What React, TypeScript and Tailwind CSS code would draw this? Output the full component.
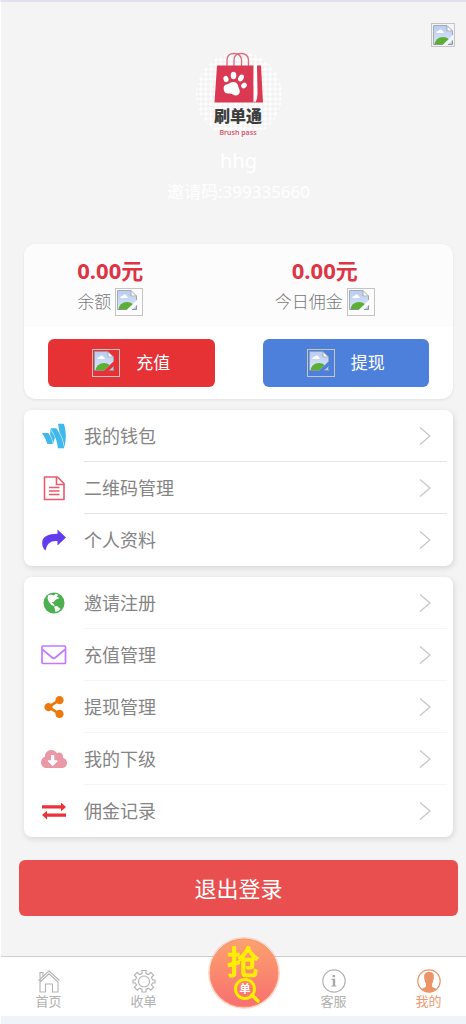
import React from 'react';
import { FaGoogleWallet, FaShareAlt, FaCloudDownloadAlt } from 'react-icons/fa';

const FONT = "font-['Noto_Sans','Noto_Sans_CJK_SC',sans-serif]";

type IconProps = { className?: string };

// Placeholder for pictures that have not loaded
function MissingImage({ className }: IconProps) {
  return (
    <span className={`inline-flex shrink-0 border border-[#c4c4c4] p-px ${className}`}>
      <svg viewBox="0 0 20 20" className="w-5 h-5">
        <defs>
          <linearGradient id="sky" x1="0" y1="0" x2="0" y2="1">
            <stop offset="0" stopColor="#b9cdf0" />
            <stop offset="1" stopColor="#dbe6fa" />
          </linearGradient>
          <clipPath id="sheet">
            <path d="M1 1H14L20 7V10L9.500 20H1Z" />
          </clipPath>
        </defs>
        <path d="M1 1H14L20 6.500V10L9.500 20H1Z" fill="url(#sky)" />
        <ellipse cx="10" cy="20" rx="8.500" ry="8" fill="#5cae35" clipPath="url(#sheet)" />
        <path d="M3.500 8q-.5-2 1.800-2q.7-2 2.500-1.500q1.700.3 1.700 1.700q1.600.2 1.200 1.800z" fill="#fff" />
        <path d="M20 15V20H14.500Z" fill="#b9cdf0" />
        <path d="M14 1V6.500H20Z" fill="#fff" />
        <path d="M0.500 19.500V0.500H14L19.500 6V10M14 1V6H19.500" fill="none" stroke="#9aa3ae" strokeWidth="0.900" />
        <path d="M0.500 19.500H9.500M15 19.500H19.500V15.500" fill="none" stroke="#8a929c" />
      </svg>
    </span>
  );
}

function Logo() {
  return (
    <svg viewBox="0 0 86 86" className="w-[86px] h-[86px]">
      <defs>
        <pattern id="check" width="7" height="7" patternUnits="userSpaceOnUse" patternTransform="rotate(45)">
          <rect width="7" height="7" fill="#f2f2f2" />
          <rect width="3.500" height="3.500" fill="#fdfdfd" />
          <rect x="3.500" y="3.500" width="3.500" height="3.500" fill="#fdfdfd" />
        </pattern>
      </defs>
      <circle cx="43" cy="43" r="43" fill="url(#check)" />
      <g fill="none" stroke="#dc6a7e" strokeWidth="1.300">
        <path d="M31 14V8q0-6.500 7-6.500t7.500 6.500v6" />
        <path d="M38 14V8q0-6.500 7-6.500t7.500 6.500v6" />
      </g>
      <path d="M21 13.500H58Q57 32 59 50.500H18.500Z" fill="#db3853" />
      <path d="M57.500 13.500h4q-1 20 0 26q0 8-4 11z" fill="#fff" />
      <path d="M61 13.500h4l2 37h-8q3-3 2.500-13z" fill="#db3853" />
      <g fill="#fff">
        <ellipse cx="30" cy="27" rx="2.500" ry="3.200" transform="rotate(-15 30 27)" />
        <ellipse cx="37.500" cy="23.500" rx="2.800" ry="3.700" />
        <ellipse cx="45" cy="26" rx="2.600" ry="3.700" transform="rotate(30 45 26)" />
        <ellipse cx="48" cy="33.500" rx="2.500" ry="3" transform="rotate(50 48 33.500)" />
        <path d="M28 39q-2-6 4-7q4-3 8-1.500q2 1.500 2.500 5q2.500 4.500 0 7q-2.500 2-5.500 0q-2-1.500-5-1q-3 0-4-2.500z" />
      </g>
      <text x="42" y="70" textAnchor="middle" fontSize="16" fontWeight="900" fill="#3d3d3d">刷单通</text>
      <text x="42" y="83" textAnchor="middle" fontSize="7" fontWeight="600" fill="#d4576c">Brush pass</text>
    </svg>
  );
}

const FileIcon = () => (
  <svg viewBox="0 0 24 26" className="w-6 h-[26px]" fill="none" stroke="#ea5a69" strokeWidth="1.600">
    <path d="M2.500 2H15.500L22 8.500V24.500H2.500Z" strokeLinejoin="round" />
    <path d="M14.500 2V9.500H22M7 12.500H17.500M7 16H17.500M7 19.500H17.500" />
  </svg>
);

const ShareIcon = () => (
  <svg viewBox="0 0 24 22" className="w-6 h-[22px]" fill="#633cf0">
    <path d="M15.500 0.500L24 8.500L15.500 16.500V12Q5 11 3.500 21.500Q0 19 0.200 13Q1 5 15.500 4.800Z" />
  </svg>
);

const GlobeIcon = () => (
  <svg viewBox="0 0 22 22" className="w-[22px] h-[22px]">
    <circle cx="11" cy="11" r="10.500" fill="#4caf50" />
    <path d="M5 3.500L8 2.500L10.500 3.500L13 1.800L15.500 3L13.500 4.500L16.500 6L13 7.500L10.500 10L8.500 10L11.500 13L11 14L8.500 13L6 10L4.500 6.500Z" fill="#fff" />
    <path d="M11 14.500L14 14L17.500 17Q15.500 19.500 12.500 20L12 17.500Z" fill="#fff" />
  </svg>
);

const MailIcon = () => (
  <svg viewBox="0 0 26 20" className="w-[26px] h-5" fill="none" stroke="#c278ff" strokeWidth="1.700">
    <rect x="1" y="1" width="23.500" height="17.500" rx="1" />
    <path d="M1.500 4.500L11 12.500Q12.800 14 14.500 12.500L24 4.500" />
  </svg>
);

const ExchangeIcon = () => (
  <svg viewBox="0 0 24 18" className="w-6 h-[18px]" fill="#eb3337">
    <path d="M0 3.200H19V0.500L24 4.900L19 9.300V6.500H0Z" />
    <path d="M24 11.500H5V8.700L0 13.100L5 17.500V14.800H24Z" />
  </svg>
);

const Chevron = () => (
  <svg viewBox="0 0 12 20" className="w-3 h-5" fill="none" stroke="#cbc7c7" strokeWidth="1.400">
    <path d="M1 1.500L11 10L1 18.500" />
  </svg>
);

const HomeIcon = () => (
  <svg viewBox="0 0 24 24" className="w-6 h-6" fill="none" stroke="#b3b3b3" strokeWidth="1.100">
    <path d="M1.500 11.500L12 2L22.500 11.500" />
    <path d="M3 13L12 4.800L21 13V23H15.500V15H8.500V23H3V10M3 9V3.500H6V7" />
  </svg>
);

const GearIcon = () => (
  <svg viewBox="0 0 24 24" className="w-6 h-6" fill="none" stroke="#b3b3b3" strokeWidth="1.200">
    <circle cx="12" cy="12.500" r="5.500" />
    <path d="M10 1.500h4v3l2.500 1l2.300-2.100l2.800 2.800L19.500 8.500l1 2.500h2.500v3h-2.500l-1 2l2 2.500l-2.700 2.700l-2.300-1.900l-2.500 1.200v2.500h-4v-2.500l-2.500-1.200l-2.300 1.900l-2.700-2.700l2-2.500l-1-2H1v-3h2.500l1-2.500L2.400 6.200l2.800-2.800l2.300 2.100l2.500-1z" />
  </svg>
);

const InfoIcon = () => (
  <svg viewBox="0 0 24 24" className="w-6 h-6">
    <circle cx="12" cy="12" r="11.200" fill="none" stroke="#b3b3b3" strokeWidth="1.200" />
    <path d="M10.600 6h2.500v2.300h-2.500zM9.500 9.800h3.700v6.700h1.300v1.100H9.500v-1.100h1.300v-5.600H9.500z" fill="#a8a8a8" />
  </svg>
);

const UserIcon = () => (
  <svg viewBox="0 0 24 24" className="w-6 h-6">
    <circle cx="12" cy="12" r="11.200" fill="#fff" stroke="#ea9468" strokeWidth="1.200" />
    <path d="M7.300 5.500Q9 2.500 12 2.800Q15.500 2.500 16.700 5.500Q17.300 9 16.300 11.500Q15.800 14 15 14.800V17.500Q16 18.500 20 20Q16.500 23.300 12 23.300T4 20Q8 18.500 9 17.500V14.800Q8 13.500 7.500 11Q6.700 8.500 7.300 5.500Z" fill="#ea9468" />
  </svg>
);

function GrabIcon() {
  return (
    <svg viewBox="0 0 76 76" className="w-[76px] h-[76px]">
      <defs>
        <linearGradient id="grab" x1="0" y1="0" x2="0" y2="1">
          <stop offset="0" stopColor="#fca26e" />
          <stop offset="1" stopColor="#f86f70" />
        </linearGradient>
      </defs>
      <circle cx="38" cy="38" r="36" fill="#fb9a78" opacity="0.35" />
      <circle cx="38" cy="38" r="34" fill="url(#grab)" stroke="#fb8f6c" />
      <text x="37" y="39" textAnchor="middle" fontSize="32" fontWeight="500" fill="#ffee00" stroke="#ffee00" strokeLinejoin="round">抢</text>
      <circle cx="39" cy="54" r="9.500" fill="none" stroke="#ffee00" strokeWidth="3" />
      <path d="M46 60L52 66" stroke="#ffee00" strokeWidth="3.500" strokeLinecap="round" />
      <text x="39" y="58" textAnchor="middle" fontSize="11" fontWeight="700" fill="#fff">单</text>
    </svg>
  );
}

const BALANCES = [
  { label: '余额', amount: '0.00元' },
  { label: '今日佣金', amount: '0.00元' },
];

const ACCOUNT_MENU = [
  { label: '我的钱包', icon: <FaGoogleWallet className="w-7 h-7 text-[#3fb8ec]" /> },
  { label: '二维码管理', icon: <FileIcon /> },
  { label: '个人资料', icon: <ShareIcon /> },
];

const MANAGE_MENU = [
  { label: '邀请注册', icon: <GlobeIcon /> },
  { label: '充值管理', icon: <MailIcon /> },
  { label: '提现管理', icon: <FaShareAlt className="w-[22px] h-[22px] text-[#ec780e]" /> },
  { label: '我的下级', icon: <FaCloudDownloadAlt className="w-[26px] h-[26px] text-[#eb98a6]" /> },
  { label: '佣金记录', icon: <ExchangeIcon /> },
];

function Menu({ items, line }: { items: typeof ACCOUNT_MENU; line: string }) {
  return (
    <ul className="mx-[23px] mt-[11px] rounded-lg bg-white shadow-[1px_2px_6px_rgba(0,0,0,0.12)]">
      {items.map((item, i) => (
        <li key={item.label}>
          <a href="#" className="flex h-[52px] items-center pr-1.5">
            <span className="flex w-[60px] justify-center">{item.icon}</span>
            <span className={`flex h-full flex-1 items-center justify-between pr-4 ${i < items.length - 1 ? `border-b ${line}` : ''}`}>
              <span className="text-lg text-[#848484]">{item.label}</span>
              <Chevron />
            </span>
          </a>
        </li>
      ))}
    </ul>
  );
}

function Tab({ label, children, active }: { label: string; children: React.ReactNode; active?: boolean }) {
  return (
    <a href="#" className={`flex w-1/5 flex-col items-center pt-3 text-[13px] leading-4 ${active ? 'text-[#ee9c74]' : 'text-[#b0b0b0]'}`}>
      {children}
      {label}
    </a>
  );
}

export default function App() {
  return (
    <div className={`overflow-x-hidden border-t-2 border-l border-t-[#dfe1ee] border-l-white bg-[#f4f4f4] ${FONT}`}>
      {/* The page runs slightly past the right edge of the window */}
      <div className="-mr-2.5">
        <header className="relative flex h-[242px] flex-col items-center pt-[50px] text-white">
          <a href="#" className="absolute top-[21px] right-[21px] flex">
            <MissingImage className="w-6 h-6" />
          </a>
          <Logo />
          <h1 className="mt-2 text-xl leading-[30px]">hhg</h1>
          <p className="text-[17px] leading-8">邀请码:399335660</p>
        </header>

        <section className="mx-[23px] overflow-hidden rounded-xl bg-white shadow-[0_1px_3px_rgba(0,0,0,0.08)]">
          <div className="grid grid-cols-2 bg-[#fcfcfc] pt-2.5">
            {BALANCES.map((b) => (
              <div key={b.label} className="flex h-[73px] flex-col items-center gap-0.5 pr-[42px]">
                <strong className="text-[22px] leading-8 font-bold text-[#dd3545]">{b.amount}</strong>
                <span className="flex items-center gap-1 text-[17px] font-light text-[#777]">
                  {b.label}
                  <MissingImage className="w-7 h-7" />
                </span>
              </div>
            ))}
          </div>
          <div className="grid grid-cols-2 gap-12 px-6 py-3 text-[17px] text-white">
            <button className="flex h-12 items-center justify-center gap-4 rounded-md bg-[#e63135]">
              <MissingImage className="w-7 h-7" />
              充值
            </button>
            <button className="flex h-12 items-center justify-center gap-4 rounded-md bg-[#4c80db]">
              <MissingImage className="w-7 h-7" />
              提现
            </button>
          </div>
        </section>

        <Menu items={ACCOUNT_MENU} line="border-[#e4e4e4]" />
        <Menu items={MANAGE_MENU} line="border-[#f5f5f5]" />

        <div className="px-[18px] pt-[23px] pb-10">
          <button className="h-14 w-full rounded-md bg-[#ea4f50] text-[22px] text-white">退出登录</button>
        </div>

        <nav className="flex h-[60px] border-t border-[#cfcfcf] bg-white">
          <Tab label="首页"><HomeIcon /></Tab>
          <Tab label="收单"><GearIcon /></Tab>
          <a href="#" className="-mt-[22px] flex w-1/5 justify-center pl-2.5">
            <GrabIcon />
          </a>
          <Tab label="客服"><InfoIcon /></Tab>
          <Tab label="我的" active><UserIcon /></Tab>
        </nav>
        <div className="h-2 bg-[#f0f3f9]" />
      </div>
    </div>
  );
}
